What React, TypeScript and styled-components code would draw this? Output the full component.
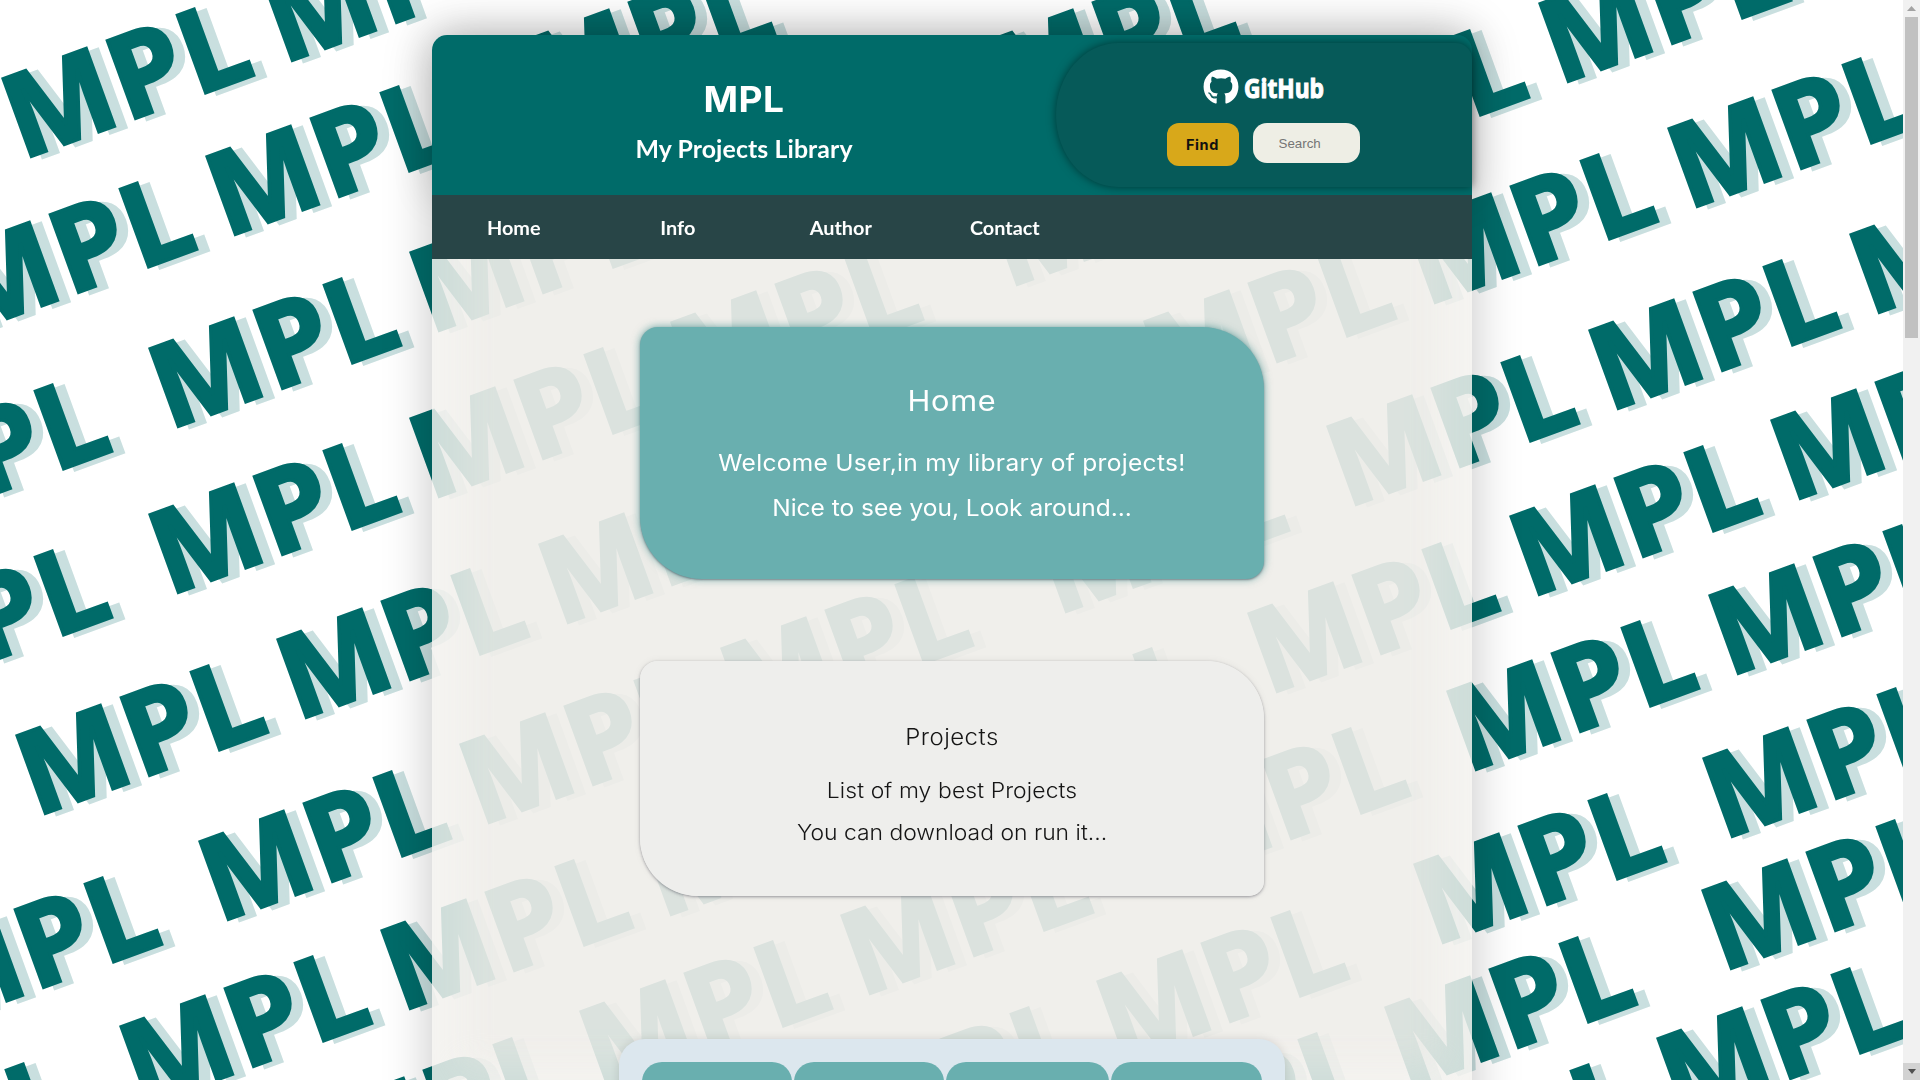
import React from "react";
import styled, { createGlobalStyle } from "styled-components";
import { FaGithub } from "react-icons/fa";

const GlobalStyle = createGlobalStyle`
  *, *::before, *::after { box-sizing: border-box; }
  body { margin: 0; overflow: hidden; background: #fff; }
  h1, h2, p { margin: 0; font-weight: inherit; }
`;

const Screen = styled.div`
  display: flex;
  width: 1920px;
  height: 1080px;
  overflow: hidden;
  background: #fff;
`;

const Page = styled.div`
  position: relative;
  flex: 1;
  min-width: 0;
  overflow: hidden;
  isolation: isolate;
`;

const Backdrop = styled.svg`
  position: absolute;
  inset: 0;
  z-index: -1;
  font-family: "Open Sans", "Noto Sans", sans-serif;
  font-weight: 700;
  font-size: 115.5px;
  letter-spacing: 2px;
  stroke-width: 3.6px;
  stroke-linejoin: miter;
`;

const Sheet = styled.div`
  width: 1040px;
  height: 1200px;
  margin: 35px 0 0 432px;
  border-radius: 15px 15px 0 0;
  box-shadow: 0 0 50px rgba(0, 0, 0, 0.23);
`;

const Header = styled.header`
  display: flex;
  justify-content: space-between;
  align-items: center;
  height: 160px;
  border-radius: 15px 15px 0 0;
  background: #006b69;
  box-shadow: 0 0 40px rgba(0, 0, 0, 0.16);
`;

const Brand = styled.div`
  width: 624px;
  padding-top: 12px;
  text-align: center;
  color: #fff;
`;

const Title = styled.h1`
  font: 700 35px/42px Inter, sans-serif;
  letter-spacing: 0.5px;
  transform: scaleX(1.06);
`;

const Subtitle = styled.p`
  margin-top: 13px;
  font: 700 24px/32px Lato, sans-serif;
  letter-spacing: 0.1px;
  transform: scaleX(1.035);
`;

const SearchPanel = styled.div`
  display: flex;
  flex-direction: column;
  align-items: center;
  width: 416px;
  height: 144px;
  padding: 25px 2px 0 0;
  border-radius: 62px 16px 0 62px / 72px 16px 0 72px;
  background: #065a59;
  box-shadow: 0 0 10px rgba(0, 0, 0, 0.5);
`;

const Logo = styled.div`
  display: flex;
  align-items: center;
  gap: 5px;
  height: 38px;
  color: #fff;
`;

const LogoWord = styled.svg`
  display: block;
  overflow: visible;
  font: 700 27px "Open Sans", sans-serif;
  stroke: #fff;
  stroke-width: 1.1px;
`;

const SearchRow = styled.div`
  display: flex;
  align-items: flex-start;
  gap: 14px;
  margin-top: 17px;
`;

const FindButton = styled.button`
  width: 72px;
  height: 43px;
  padding: 0;
  border: 0;
  border-radius: 12px;
  background: #d8a81a;
  color: #111;
  font: 700 14.5px Inter, sans-serif;
  letter-spacing: 0.6px;
`;

const SearchInput = styled.input`
  width: 107px;
  height: 40px;
  padding: 0 26px;
  border: 0;
  border-radius: 14px;
  background: #eeeee5;
  font: 13.33px "Liberation Sans", Arial, sans-serif;
  &::placeholder { color: #757575; }
`;

const Nav = styled.nav`
  position: relative;
  display: flex;
  height: 64px;
  background: #284547;
`;

const NavLink = styled.a`
  width: 163.6px;
  text-align: center;
  color: #fff;
  font: 700 19px/66px Lato, sans-serif;
  transform: scaleX(1.045);
`;

const Content = styled.main`
  position: relative;
  display: flex;
  flex-direction: column;
  align-items: center;
  height: 976px;
  padding-top: 68px;
  overflow: hidden;
  isolation: isolate;
  background: rgba(243, 242, 238, 0.85);
  &::before {
    content: "";
    position: absolute;
    inset: -40px 32px 170px;
    z-index: -1;
    background: rgba(234, 231, 227, 0.43);
    filter: blur(16px);
  }
`;

const Card = styled.section<{ $tone: "teal" | "light" }>`
  flex: none;
  width: 624px;
  height: ${(p) => (p.$tone === "teal" ? 252 : 235)}px;
  padding-top: ${(p) => (p.$tone === "teal" ? 54 : 60)}px;
  border-radius: ${(p) => (p.$tone === "teal" ? "18px 62px 18px 62px" : "18px 58px 15px 58px")};
  text-align: center;
  color: ${(p) => (p.$tone === "teal" ? "#fff" : "#151515")};
  background: ${(p) => (p.$tone === "teal" ? "#69afaf" : "rgba(238, 238, 236, 0.985)")};
  box-shadow: ${(p) =>
    p.$tone === "teal"
      ? "0 0 9px rgba(0, 107, 107, 0.55), 0 1px 2px rgba(90, 60, 80, 0.5)"
      : "0 1px 3px rgba(30, 30, 50, 0.4), 0 0 8px rgba(0, 0, 0, 0.06)"};
  font-family: Inter, sans-serif;
  font-weight: ${(p) => (p.$tone === "teal" ? 400 : 300)};
  & + & { margin-top: 82px; }
`;

const Line = styled.p<{ $size: number; $height: number; $track?: number; $gap?: number }>`
  margin-top: ${(p) => p.$gap ?? 0}px;
  font-size: ${(p) => p.$size}px;
  line-height: ${(p) => p.$height}px;
  letter-spacing: ${(p) => p.$track ?? 0}px;
  white-space: nowrap;
  transform: scaleX(1.065);
`;

const Shelf = styled.section`
  display: flex;
  flex: none;
  gap: 2.4px;
  width: 666px;
  height: 300px;
  margin-top: 143px;
  padding: 23px 23px;
  border-radius: 26px;
  background: #dce7ee;
  box-shadow: 0 0 10px rgba(0, 0, 0, 0.12);
`;

const Project = styled.div<{ $w: number }>`
  width: ${(p) => p.$w}px;
  border-radius: 20px;
  background: #69afaf;
`;

const Scrollbar = styled.div`
  display: flex;
  flex-direction: column;
  align-items: center;
  width: 17px;
  background: #f1f1f1;
`;

const ScrollEnd = styled.div<{ $on?: boolean }>`
  display: flex;
  align-items: center;
  justify-content: center;
  width: 17px;
  height: 17px;
  background: ${(p) => (p.$on ? "#d2d2d2" : "#f1f1f1")};
`;

const Thumb = styled.div`
  width: 13px;
  height: 321px;
  margin-bottom: auto;
  background: #c1c1c1;
`;

const marks: [number, number][] = [
  [1, 78], [262, -18], [205, 156], [-56, 252], [148, 348], [-141, 454], [409, 252], [409, 418],
  [148, 514], [538, 544], [523, 40], [987, 40], [1173, -108], [708, -108], [-141, 620], [15, 735],
  [276, 639], [198, 841], [-91, 947], [119, 1026], [380, 930], [459, 744], [-170, 1133], [579, 1011],
  [318, 1108], [1667, 128], [1588, 330], [1326, 426], [1849, 234], [1770, 420], [1509, 516],
  [1405, 224], [1538, 3], [1276, 100], [1143, 321], [1708, 595], [1446, 691], [1702, 758],
  [1247, 613], [1413, 864], [1157, 798], [1701, 890], [1384, 1007], [1656, 1038], [1096, 981],
  [1123, 1103], [1395, 1134], [670, 322], [987, 206], [720, 648], [1036, 533], [958, 718],
  [840, 915], [835, 1077], [641, 836],
];

const navItems = ["Home", "Info", "Author", "Contact"];
const projectWidths = [149.7, 149.7, 162.8, 150.4];

export default function App() {
  return (
    <>
      <GlobalStyle />
      <Screen>
        <Page>
          <Backdrop width="1903" height="1080" aria-hidden="true">
            {marks.map(([x, y]) => (
              <g key={`${x},${y}`} transform={`translate(${x} ${y}) rotate(-20)`}>
                <text x="2" y="88.8" fill="#c9dfdf" stroke="#c9dfdf">MPL</text>
                <text x="-8.5" y="83.9" fill="#006b69" stroke="#006b69">MPL</text>
              </g>
            ))}
          </Backdrop>
          <Sheet>
            <Header>
              <Brand>
                <Title>MPL</Title>
                <Subtitle>My Projects Library</Subtitle>
              </Brand>
              <SearchPanel>
                <Logo>
                  <FaGithub size={36} />
                  <LogoWord width="80" height="36">
                    <text x="0" y="28.7" fill="#fff" textLength="80" lengthAdjust="spacingAndGlyphs">GitHub</text>
                  </LogoWord>
                </Logo>
                <SearchRow>
                  <FindButton>Find</FindButton>
                  <SearchInput placeholder="Search" />
                </SearchRow>
              </SearchPanel>
            </Header>
            <Nav>
              {navItems.map((item) => (
                <NavLink key={item}>{item}</NavLink>
              ))}
            </Nav>
            <Content>
              <Card $tone="teal">
                <Line as="h2" $size={28.8} $height={40} $track={0.7}>Home</Line>
                <Line $size={23} $height={45} $gap={20} $track={0.3}>Welcome User,in my library of projects!</Line>
                <Line $size={23} $height={45}>Nice to see you, Look around...</Line>
              </Card>
              <Card $tone="light">
                <Line as="h2" $size={22.5} $height={32} $track={0.45}>Projects</Line>
                <Line $size={21.5} $height={42} $gap={16} $track={0.1}>List of my best Projects</Line>
                <Line $size={21.5} $height={42}>You can download on run it...</Line>
              </Card>
              <Shelf>
                {projectWidths.map((w, i) => (
                  <Project key={i} $w={w} />
                ))}
              </Shelf>
            </Content>
          </Sheet>
        </Page>
        <Scrollbar>
          <ScrollEnd>
            <svg width="9" height="5"><path d="M0 5 4.5 0 9 5z" fill="#a3a3a3" /></svg>
          </ScrollEnd>
          <Thumb />
          <ScrollEnd $on>
            <svg width="8" height="5"><path d="M0 0h8L4 5z" fill="#505050" /></svg>
          </ScrollEnd>
        </Scrollbar>
      </Screen>
    </>
  );
}
